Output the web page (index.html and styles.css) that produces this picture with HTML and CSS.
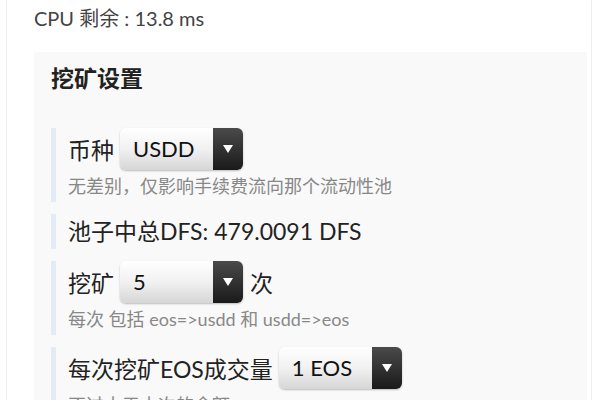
FILE: index.html
```html
<!DOCTYPE html>
<html lang="zh-CN">
<head>
    <meta charset="UTF-8">
    <title>挖矿设置</title>
    <link rel="stylesheet" href="styles.css">
</head>
<body>
<div class="page">
    <p class="cpu">CPU 剩余 : 13.8 ms</p>
    <div class="panel">
        <h3 class="title">挖矿设置</h3>
        <div class="row">
            <div class="line">
                <span class="label">币种</span>
                <div class="select"><span class="value">USDD</span><span class="arrow"></span></div>
            </div>
            <p class="hint">无差别，仅影响手续费流向那个流动性池</p>
        </div>
        <div class="row">
            <p class="text">池子中总DFS: 479.0091 DFS</p>
        </div>
        <div class="row">
            <div class="line">
                <span class="label">挖矿</span>
                <div class="select"><span class="value">5</span><span class="arrow"></span></div>
                <span class="unit">次</span>
            </div>
            <p class="hint">每次 包括 eos=&gt;usdd 和 usdd=&gt;eos</p>
        </div>
        <div class="row">
            <div class="line">
                <span class="label">每次挖矿EOS成交量</span>
                <div class="select"><span class="value">1 EOS</span><span class="arrow"></span></div>
            </div>
            <p class="hint">不过大于本次的余额</p>
        </div>
    </div>
</div>
</body>
</html>
```

FILE: styles.css
```css
* {
    margin: 0;
    padding: 0;
    box-sizing: border-box;
}

html, body {
    height: 100%;
    background: #fff;
}

body {
    font-family: Lato, "Noto Sans CJK SC", sans-serif;
    color: #222;
    overflow: hidden;
}

.page {
    height: 100%;
    margin: 0 8px 0 6px;
    padding: 0 4px 0 27px;
    border-left: 1px solid #eee;
    border-right: 1px solid #eee;
}

.cpu {
    height: 52px;
    padding-top: 5px;
    font-size: 20px;
    line-height: 26px;
    color: #444;
}

.panel {
    background: #f9f9f9;
    padding: 12px 17px 20px;
    min-height: 400px;
}

.title {
    font-size: 23px;
    line-height: 28px;
    font-weight: bold;
    color: #222;
    margin-bottom: 36px;
}

.row {
    border-left: 5px solid #e3ebf5;
    padding-left: 12px;
    margin-bottom: 12px;
}

.line {
    display: flex;
    align-items: center;
    height: 42px;
}

.label, .unit, .text {
    font-size: 23px;
}

.text {
    line-height: 35px;
}

.unit {
    margin-left: 7px;
}

.select {
    display: flex;
    width: 123px;
    height: 42px;
    margin-left: 6px;
    border-radius: 6px;
    overflow: hidden;
    box-shadow: 0 1px 2px rgba(0, 0, 0, 0.25);
}

.value {
    flex: 1;
    padding-left: 13px;
    font-size: 22px;
    line-height: 42px;
    color: #111;
    background: linear-gradient(#ffffff, #f1f1f1 50%, #d6d6d6);
}

.arrow {
    width: 30px;
    display: flex;
    align-items: center;
    justify-content: center;
    background: linear-gradient(#4a4a4a, #1a1a1a);
}

.arrow::after {
    content: "";
    border-left: 5px solid transparent;
    border-right: 5px solid transparent;
    border-top: 8px solid #fff;
}

.hint {
    font-size: 18px;
    line-height: 32px;
    color: #888;
}
```
